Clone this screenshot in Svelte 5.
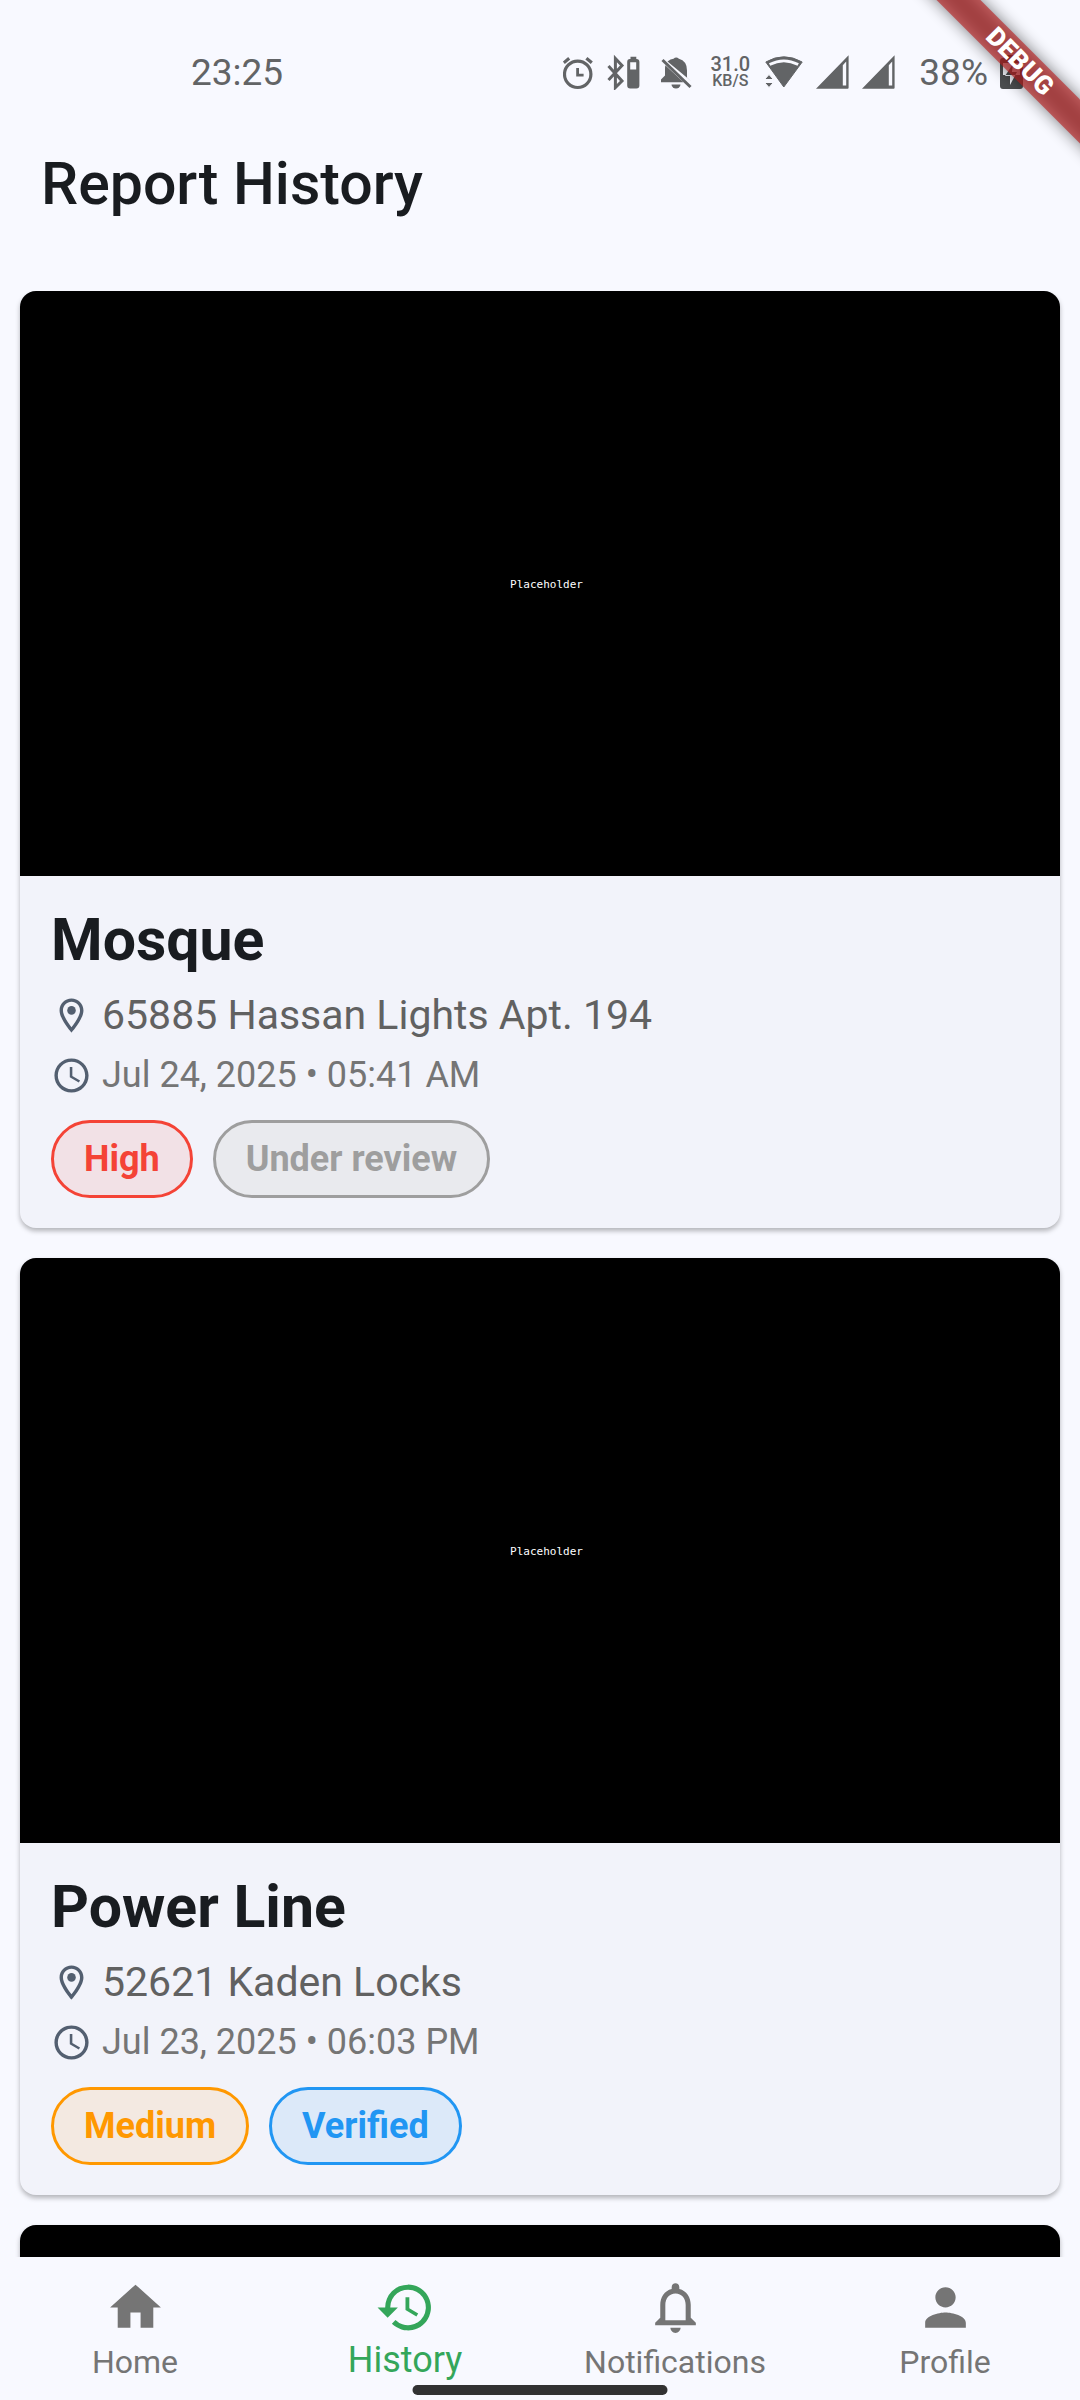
<script>
  const reports = [
    {
      title: 'Mosque',
      address: '65885 Hassan Lights Apt. 194',
      date: 'Jul 24, 2025 • 05:41 AM',
      tags: [
        { label: 'High', tone: 'red' },
        { label: 'Under review', tone: 'grey' }
      ]
    },
    {
      title: 'Power Line',
      address: '52621 Kaden Locks',
      date: 'Jul 23, 2025 • 06:03 PM',
      tags: [
        { label: 'Medium', tone: 'orange' },
        { label: 'Verified', tone: 'blue' }
      ]
    }
  ];

  const tabs = [
    { label: 'Home', path: 'M10 20v-6h4v6h5v-8h3L12 3 2 12h3v8z' },
    {
      label: 'History',
      path: 'M13 3a9 9 0 0 0-9 9H1l3.89 3.89.07.14L9 12H6a7 7 0 1 1 2.06 4.94l-1.42 1.42A9 9 0 1 0 13 3zm-1 5v5l4.28 2.54.72-1.21-3.5-2.08V8H12z'
    },
    {
      label: 'Notifications',
      path: 'M12 22c1.1 0 2-.9 2-2h-4c0 1.1.9 2 2 2zm6-6v-5c0-3.07-1.63-5.64-4.5-6.32V4c0-.83-.67-1.5-1.5-1.5s-1.5.67-1.5 1.5v.68C7.64 5.36 6 7.92 6 11v5l-2 2v1h16v-1l-2-2zm-2 1H8v-6c0-2.48 1.51-4.5 4-4.5s4 2.02 4 4.5v6z'
    },
    {
      label: 'Profile',
      path: 'M12 12c2.21 0 4-1.79 4-4s-1.79-4-4-4-4 1.79-4 4 1.79 4 4 4zm0 2c-2.67 0-8 1.34-8 4v2h16v-2c0-2.66-5.33-4-8-4z'
    }
  ];

  let active = $state('History');
</script>

<div class="screen">
  <div class="status">
    <span class="clock">23:25</span>
    <div class="indicators">
      <svg width="32" height="36" viewBox="0 0 32 36" fill="none" stroke="#626466">
        <circle cx="14.7" cy="20.3" r="13.2" stroke-width="3.2" />
        <path d="M14.6 14v7.2h6" stroke-width="2.8" />
        <path d="M.8 8.8l5.4-4.6M23.4 4.2l5.4 4.6" stroke-width="3.2" />
      </svg>
      <svg width="38" height="36" viewBox="0 0 38 36">
        <path d="M1.5 12L15 27l-6.6 6.5v-29L15 11.5 1.5 26" fill="none" stroke="#626466" stroke-width="3" />
        <path fill="#626466" fill-rule="evenodd" d="M23.5 5V2.8h5.8V5A3 3 0 0 1 32.4 8v23.5a3 3 0 0 1-3 3h-6.2a3 3 0 0 1-3-3V8a3 3 0 0 1 3.3-3zM23.2 8.2v7.2h6V8.2z" />
      </svg>
      <svg width="42" height="36" viewBox="0 0 42 36">
        <g fill="#626466">
          <path d="M10.5 7.5Q13.5 5 16.5 4.8a4 4 0 0 1 5.4 0Q30 7 30 16.5v7l4 3.5z" />
          <path d="M8.3 11.3l18.2 16.9H4v-2.7l4-4V14z" />
          <path d="M14.5 30.5h9a4.5 4 0 0 1-9 0z" />
        </g>
        <path d="M5.5 6l28 27" fill="none" stroke="#626466" stroke-width="3" />
      </svg>
      <span class="speed"><b>31.0</b><small>KB/S</small></span>
      <svg width="38" height="36" viewBox="0 0 38 36">
        <path fill="#626466" stroke="#626466" stroke-linejoin="round" d="M18.8 33L.8 8Q18.8-2.400 37.2 8z" />
        <path fill="none" stroke="#f8f9ff" stroke-width="2.8" d="M4.600 10.600Q18.800 3 33.200 10.600" />
        <path fill="#626466" stroke="#f8f9ff" stroke-width="1" d="M-.5 25.500L4 20.500l4.500 5zM-.5 28.500h9L4 33.500z" />
      </svg>
      {#each [0, 1] as sim (sim)}
        <svg width="34" height="36" viewBox="0 0 34 36">
          <path fill="#626466" fill-rule="evenodd" d="M1 34.8L33.6 1.2v32.6a1 1 0 0 1-1 1zM27.8 11.2v20.4h3.4V7.6z" />
        </svg>
      {/each}
      <span class="percent">38%</span>
      <svg width="23" height="36" viewBox="0 0 23 36">
        <path fill="#4c4e50" fill-rule="evenodd" d="M6 4V1h11v3h3a3 3 0 0 1 3 3v25a3 3 0 0 1-3 3H3a3 3 0 0 1-3-3V7a3 3 0 0 1 3-3zM3 9v12h17V9zM13 10L5 22h5v9l7-13h-5z" />
      </svg>
    </div>
  </div>

  <div class="corner">
    <div class="band shade"></div>
    <div class="band ribbon">DEBUG</div>
  </div>

  <header><h1>Report History</h1></header>

  <main>
    {#each reports as report (report.title)}
      <article>
        <div class="photo"><span>Placeholder</span></div>
        <div class="details">
          <h2>{report.title}</h2>
          <p class="address">
            <svg viewBox="0 0 24 24"><path d="M12 2C8.13 2 5 5.13 5 9c0 5.25 7 13 7 13s7-7.75 7-13c0-3.87-3.13-7-7-7zM7 9c0-2.76 2.24-5 5-5s5 2.24 5 5c0 2.88-2.88 7.19-5 9.88C9.92 16.21 7 11.85 7 9z" /><circle cx="12" cy="9" r="2.5" /></svg>
            {report.address}
          </p>
          <p class="date">
            <svg viewBox="0 0 24 24"><path d="M11.99 2C6.47 2 2 6.48 2 12s4.47 10 9.99 10C17.52 22 22 17.52 22 12S17.52 2 11.99 2zM12 20c-4.42 0-8-3.58-8-8s3.58-8 8-8 8 3.58 8 8-3.58 8-8 8zm.5-13H11v6l5.25 3.15.75-1.23-4.5-2.67z" /></svg>
            {report.date}
          </p>
          <div class="tags">
            {#each report.tags as tag (tag.label)}
              <span class="tag {tag.tone}">{tag.label}</span>
            {/each}
          </div>
        </div>
      </article>
    {/each}
    <article><div class="photo"></div></article>
  </main>

  <nav>
    {#each tabs as tab (tab.label)}
      <button type="button" class:active={active === tab.label} onclick={() => (active = tab.label)}>
        <svg viewBox="0 0 24 24"><path d={tab.path} /></svg>
        <span>{tab.label}</span>
      </button>
    {/each}
    <div class="handle"></div>
  </nav>
</div>

<style>
  :global(body) {
    margin: 0;
    background: #f8f9ff;
  }
  .screen {
    position: relative;
    display: flex;
    flex-direction: column;
    height: 100vh;
    overflow: hidden;
    background: #f8f9ff;
    color: #191c20;
    font-family: Roboto, sans-serif;
  }
  .status {
    display: flex;
    flex: none;
    align-items: center;
    justify-content: space-between;
    height: 144px;
    padding: 0 57px 0 191px;
    color: #626466;
    font-size: 37px;
  }
  .indicators {
    display: flex;
    align-items: center;
    gap: 12px;
  }
  .speed {
    display: flex;
    flex-direction: column;
    align-items: center;
    width: 38px;
    margin-right: 4px;
  }
  .speed b {
    font-size: 20px;
    font-weight: 500;
    line-height: 18px;
  }
  .speed small {
    font-size: 16px;
    font-weight: 500;
    line-height: 16px;
  }
  .percent {
    padding-left: 12px;
  }
  .corner {
    position: absolute;
    z-index: 2;
    top: 0;
    right: 0;
    width: 200px;
    height: 200px;
    overflow: hidden;
    pointer-events: none;
  }
  .band {
    position: absolute;
    top: 46px;
    right: -90px;
    width: 300px;
    height: 31px;
    transform: rotate(45deg);
  }
  .shade {
    background: rgb(0 0 0 / 50%);
    filter: blur(8px);
  }
  .ribbon {
    background: rgb(183 28 28 / 63%);
    color: #fff;
    font-size: 26px;
    font-weight: 900;
    line-height: 31px;
    text-align: center;
  }
  header {
    flex: none;
    height: 147px;
    padding: 0 41px;
  }
  h1 {
    margin: 0;
    padding-top: 6px;
    font-size: 59px;
    font-weight: 500;
    line-height: 68px;
  }
  main {
    display: flex;
    flex: 1;
    flex-direction: column;
    gap: 30px;
    min-height: 0;
    padding: 0 20px;
    overflow-y: auto;
    scrollbar-width: none;
  }
  article {
    flex: none;
    overflow: hidden;
    border-radius: 16px;
    background: #f2f3fa;
    box-shadow: 0 3px 5px rgb(0 0 0 / 28%);
  }
  .photo {
    display: grid;
    box-sizing: border-box;
    place-items: center;
    aspect-ratio: 16 / 9;
    padding-top: 2px;
    padding-left: 13px;
    background: #000;
    color: #fff;
    font-family: 'DejaVu Sans Mono', monospace;
    font-size: 11px;
  }
  .details {
    padding: 30px 31px;
  }
  h2,
  p {
    margin: 0;
  }
  h2 {
    font-size: 59px;
    font-weight: 700;
    line-height: 68px;
  }
  p {
    display: flex;
    align-items: center;
    gap: 10px;
  }
  p svg {
    width: 41px;
    height: 41px;
    fill: #535f70;
  }
  .address {
    margin-top: 18px;
    color: #616161;
    font-size: 41px;
    line-height: 47px;
  }
  .date {
    margin-top: 16px;
    color: #757575;
    font-size: 36px;
    line-height: 41px;
  }
  .tags {
    display: flex;
    flex-wrap: wrap;
    gap: 20px;
    margin-top: 24px;
  }
  .tag {
    padding: 15px 30px;
    border: 3px solid;
    border-radius: 39px;
    font-size: 36px;
    font-weight: 700;
    line-height: 42px;
  }
  .red {
    background: #f2e1e6;
    color: #f44336;
  }
  .grey {
    background: #e9eaee;
    color: #9e9e9e;
  }
  .orange {
    background: #f3e9e1;
    color: #ff9800;
  }
  .blue {
    background: #dce9f9;
    color: #2196f3;
  }
  nav {
    position: relative;
    display: flex;
    flex: none;
    height: 143px;
    background: #f8f9ff;
  }
  nav button {
    display: flex;
    flex: 1 1 0;
    flex-direction: column;
    align-items: center;
    min-width: 0;
    padding: 20px 0 0;
    border: 0;
    background: none;
    color: #757575;
    font-family: inherit;
    font-size: 32px;
    line-height: 48px;
    cursor: pointer;
  }
  nav .active {
    color: #34a65a;
    font-size: 36px;
    line-height: 44px;
  }
  nav svg {
    width: 61px;
    height: 61px;
    fill: currentColor;
  }
  .handle {
    position: absolute;
    bottom: 5px;
    left: 50%;
    width: 255px;
    height: 10px;
    border-radius: 5px;
    background: #323232;
    transform: translateX(-50%);
  }
</style>
